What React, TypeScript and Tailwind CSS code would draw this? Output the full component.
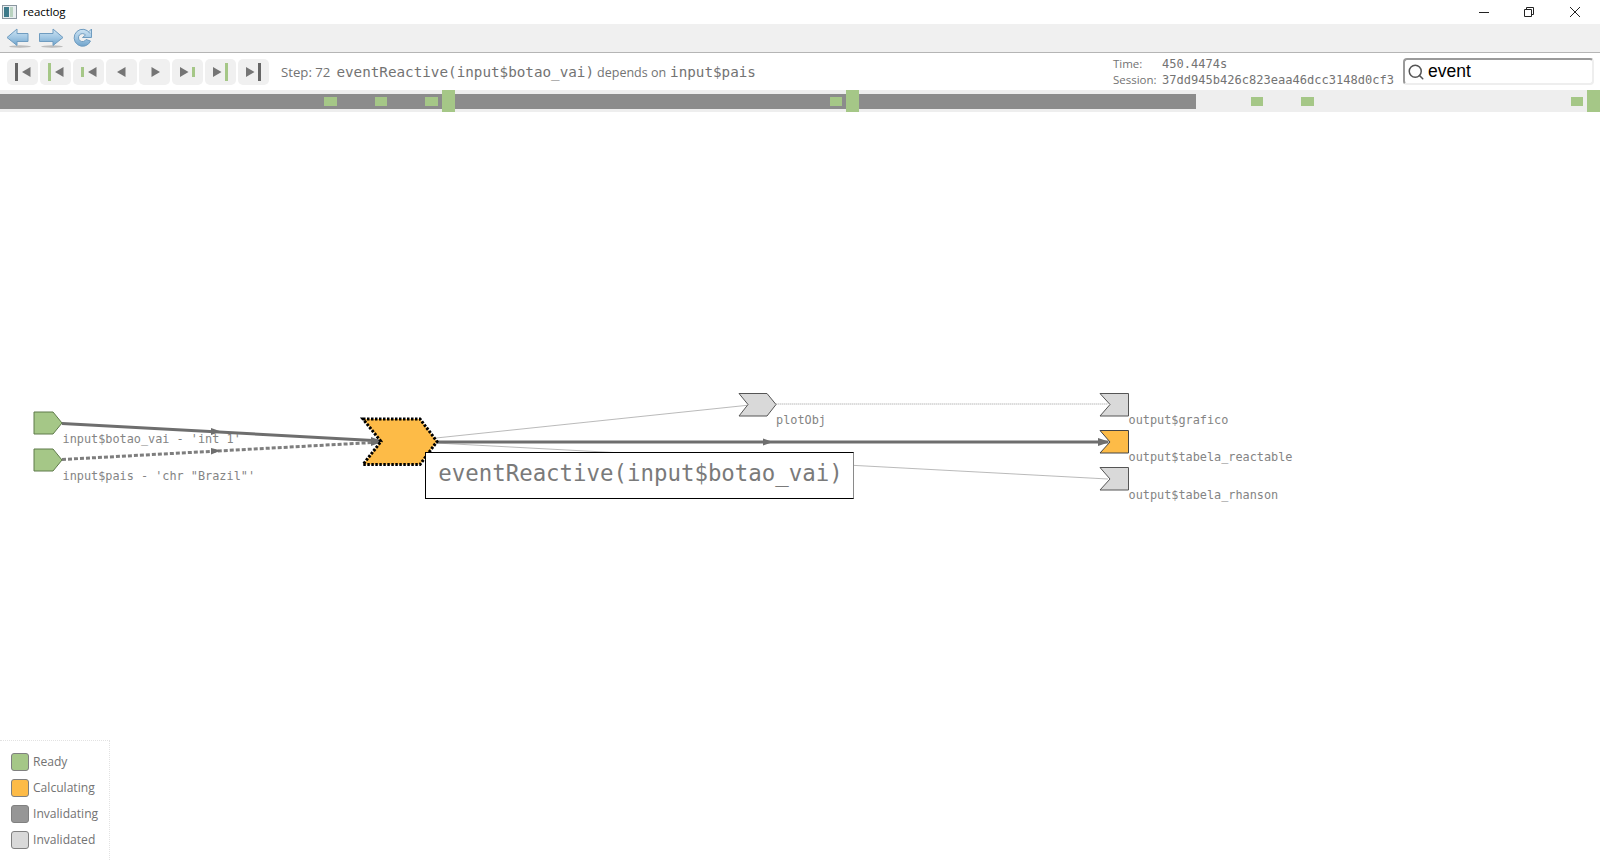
import React from "react";
import { Search } from "lucide-react";

const mono = "[font-family:'DejaVu_Sans_Mono',monospace]";
const green = "#a5c787";
const orange = "#fdbb47";
const light = "#d9d9d9";

// toolbar of the viewer window, blue glossy arrows
function NavIcons() {
  return (
    <svg width="90" height="24" viewBox="0 0 90 24" className="ml-[6px] mt-[2px]">
      <defs>
        <linearGradient id="blue" x1="0" y1="0" x2="0" y2="1">
          <stop offset="0" stopColor="#cfe4f3" />
          <stop offset="0.5" stopColor="#a3c8e4" />
          <stop offset="1" stopColor="#6fa3cb" />
        </linearGradient>
      </defs>
      <ellipse cx="14" cy="19.5" rx="11" ry="1.2" fill="#9a9a9a" opacity="0.6" />
      <ellipse cx="46" cy="19.5" rx="11" ry="1.2" fill="#9a9a9a" opacity="0.6" />
      <path d="M1 10.5 L11 2 V6.5 H22 V14.5 H11 V18.5 Z" fill="url(#blue)" stroke="#6f9cc0" strokeWidth="1" />
      <path d="M57 10.5 L47 2 V6.5 H33.5 V14.5 H47 V18.5 Z" fill="url(#blue)" stroke="#6f9cc0" strokeWidth="1" />
      <path d="M84 6.5 A8.5 8.5 0 1 0 84.5 14 L80 12.5 A4 4 0 1 1 79.5 8 L76.5 10.5 H85.5 V2 L83 4.5" fill="url(#blue)" stroke="#6f9cc0" strokeWidth="1" strokeLinejoin="round" />
    </svg>
  );
}

function Bar({ x, color, h = 18 }: { x: number; color: string; h?: number }) {
  return <rect x={x} y={13 - h / 2} width="3" height={h} fill={color} />;
}

const left = "M15 13 L23.5 8 V18 Z";
const right = "M8 8 L16.5 13 L8 18 Z";
const buttons = [
  <><Bar x={8} color="#666666" /><path d={left} fill="#757575" /></>,
  <><Bar x={8} color={green} /><path d={left} fill="#757575" /></>,
  <><Bar x={8} color={green} h={10} /><path d={left} fill="#757575" /></>,
  <path d="M11 13 L19.5 8 V18 Z" fill="#757575" />,
  <path d="M12.5 8 L21 13 L12.5 18 Z" fill="#757575" />,
  <><path d={right} fill="#757575" /><Bar x={20} color={green} h={10} /></>,
  <><path d={right} fill="#757575" /><Bar x={20} color={green} /></>,
  <><path d={right} fill="#757575" /><Bar x={20} color="#666666" /></>,
];

function Graph() {
  const line = "#6e6e6e";
  const thin = "#a8a8a8";
  const labelCls = "fill-[#848484] text-[11.85px] " + mono;
  return (
    <svg viewBox="0 112 1600 748" className="absolute inset-0 w-full h-full">
      {/* edges */}
      <line x1="436" y1="438" x2="750" y2="405" stroke={thin} strokeWidth="0.8" />
      <line x1="436" y1="443" x2="1108" y2="479" stroke={thin} strokeWidth="0.8" />
      <line x1="776" y1="404" x2="1108" y2="404" stroke={thin} strokeWidth="0.8" strokeDasharray="1.5 0.5" />
      <line x1="62" y1="423.5" x2="382" y2="441" stroke={line} strokeWidth="3" />
      <line x1="62" y1="459.5" x2="382" y2="442" stroke="#7e7e7e" strokeWidth="3" strokeDasharray="4 2" />
      <line x1="436" y1="442" x2="1108" y2="442" stroke={line} strokeWidth="3" />
      <path d="M211 428 L221 431.5 L211 435 Z" fill={line} />
      <path d="M211 448 L221 450.5 L211 454.5 Z" fill={line} />
      <path d="M763 438.5 L773 442 L763 445.5 Z" fill={line} />
      <path d="M371 437 L383 441.5 L371 446 Z" fill={line} />
      <path d="M1098 438 L1110 442 L1098 446 Z" fill={line} />
      {/* nodes */}
      <path d="M34 412 H53 L62 423 L53 434 H34 Z" fill={green} stroke="#5f7a4a" strokeWidth="1" />
      <path d="M34 449 H53 L62 460 L53 471 H34 Z" fill={green} stroke="#5f7a4a" strokeWidth="1" />
      <path d="M363 419 H420 L437 441.5 L420 464.5 H363 L381 441.5 Z" fill={orange} stroke="#000" strokeWidth="3" strokeDasharray="2.5 1.5" />
      <path d="M739 393.5 H767 L776 404.5 L767 416 H739 L748 404.5 Z" fill={light} stroke="#555" strokeWidth="1" />
      <path d="M1100 393.5 H1128.5 V416 H1100 L1110 404.5 Z" fill={light} stroke="#555" strokeWidth="1" />
      <path d="M1100 430.5 H1128.5 V453 H1100 L1110 442 Z" fill={orange} stroke="#444" strokeWidth="1" />
      <path d="M1100 467.5 H1128.5 V490 H1100 L1110 479 Z" fill={light} stroke="#555" strokeWidth="1" />
      {/* labels */}
      <text x="62.5" y="443" className={labelCls}>input$botao_vai - 'int 1'</text>
      <text x="62.5" y="480" className={labelCls}>input$pais - 'chr "Brazil"'</text>
      <text x="776" y="424" className={labelCls}>plotObj</text>
      <text x="1128.5" y="424" className={labelCls}>output$grafico</text>
      <text x="1128.5" y="461" className={labelCls}>output$tabela_reactable</text>
      <text x="1128.5" y="499" className={labelCls}>output$tabela_rhanson</text>
    </svg>
  );
}

const legend = [
  { name: "Ready", swatch: "bg-[#a5c787]" },
  { name: "Calculating", swatch: "bg-[#fdbb47]" },
  { name: "Invalidating", swatch: "bg-[#969696]" },
  { name: "Invalidated", swatch: "bg-[#d9d9d9]" },
];

export default function App() {
  return (
    <div className="w-full h-[860px] overflow-hidden flex flex-col bg-white font-['Open_Sans',sans-serif]">
      {/* title bar */}
      <div className="h-[24px] flex items-center shrink-0">
        <svg width="16" height="16" viewBox="0 0 16 16" className="ml-[2px]">
          <rect x="0.5" y="1.5" width="14" height="13" fill="#e8eef0" stroke="#8b97a0" />
          <rect x="2" y="3" width="5" height="10" fill="#3d7a8a" />
          <rect x="8" y="3" width="3" height="10" fill="#b9d3c0" />
        </svg>
        <span className="ml-[5px] text-[11.5px] tracking-[-0.1px] text-black">reactlog</span>
        <div className="ml-auto flex items-center text-black">
          <svg width="12" height="12" viewBox="0 0 12 12" className="mr-[33px]"><path d="M1 6.5 H11" stroke="#222" /></svg>
          <svg width="12" height="12" viewBox="0 0 12 12" className="mr-[34px]"><path d="M1.5 3.5 H8.5 V10.5 H1.5 Z M3.5 3.5 V1.5 H10.5 V8.5 H8.5" fill="none" stroke="#222" /></svg>
          <svg width="12" height="12" viewBox="0 0 12 12" className="mr-[19px]"><path d="M1 1 L11 11 M11 1 L1 11" stroke="#222" /></svg>
        </div>
      </div>
      {/* nav toolbar */}
      <div className="h-[29px] shrink-0 flex items-center bg-[#f0f0f0] border-b border-[#b5b5b5]">
        <NavIcons />
      </div>
      {/* controls */}
      <div className="h-[37px] shrink-0 flex items-center relative">
        <div className="flex items-center gap-[2px] ml-[7px]">
          {buttons.map((b, i) => (
            <div key={i} className="w-[31px] h-[26px] rounded-[5px] bg-[#f0f0f0]">
              <svg width="31" height="26" viewBox="0 0 31 26">{b}</svg>
            </div>
          ))}
        </div>
        <div className="ml-[12px] mt-[2px] flex items-baseline text-[13.2px] text-[#737373] whitespace-nowrap">
          <span>Step: 72</span>
          <span className={"ml-[6px] text-[14.28px] " + mono}>eventReactive(input$botao_vai)</span>
          <span className="ml-[3px] text-[12.5px]">depends on</span>
          <span className={"ml-[4px] text-[14.25px] " + mono}>input$pais</span>
        </div>
        <div className="ml-auto flex flex-col text-[11.5px] text-[#737373] leading-[16px]">
          <div className="flex items-baseline"><span className="w-[49px]">Time:</span><span className={"text-[12.05px] " + mono}>450.4474s</span></div>
          <div className="flex items-baseline"><span className="w-[49px]">Session:</span><span className={"text-[12.05px] " + mono}>37dd945b426c823eaa46dcc3148d0cf3</span></div>
        </div>
        <div className="ml-[9px] mr-[6px] w-[191px] h-[27px] flex items-center rounded-[4px] border-2 border-[#eeeeee] border-t-[#9a9a9a] border-l-[#9a9a9a]">
          <Search size={18} strokeWidth={2} className="ml-[2px] text-[#555555]" />
          <span className="ml-[3px] text-[17.5px] text-black font-['Liberation_Sans',sans-serif]">event</span>
        </div>
      </div>
      {/* timeline */}
      <div className="h-[22px] shrink-0 relative bg-[#eeeeee]">
        <div className="absolute left-0 top-[4px] w-[1196px] h-[15px] bg-[#8c8c8c]" />
        <div className="absolute left-[324px] top-[7px] w-[13px] h-[9px] bg-[#a5c787]" />
        <div className="absolute left-[375px] top-[7px] w-[12px] h-[9px] bg-[#a5c787]" />
        <div className="absolute left-[425px] top-[7px] w-[13px] h-[9px] bg-[#a5c787]" />
        <div className="absolute left-[442px] top-0 w-[13px] h-[22px] bg-[#a5c787]" />
        <div className="absolute left-[830px] top-[7px] w-[12px] h-[9px] bg-[#a5c787]" />
        <div className="absolute left-[846px] top-0 w-[13px] h-[22px] bg-[#a5c787]" />
        <div className="absolute left-[1251px] top-[7px] w-[12px] h-[9px] bg-[#a5c787]" />
        <div className="absolute left-[1301px] top-[7px] w-[13px] h-[9px] bg-[#a5c787]" />
        <div className="absolute left-[1571px] top-[7px] w-[12px] h-[9px] bg-[#a5c787]" />
        <div className="absolute left-[1587px] top-0 w-[13px] h-[22px] bg-[#a5c787]" />
      </div>
      {/* graph canvas */}
      <div className="flex-1 relative">
        <Graph />
        <div className={"absolute left-[425px] top-[340px] w-[429px] h-[47px] pb-[3px] pl-[2px] bg-white border border-black border-r-[#8a8a8a] flex items-center justify-center text-[22.4px] text-[#7a7a7a] " + mono}>
          eventReactive(input$botao_vai)
        </div>
        <div className="absolute left-0 bottom-0 w-[110px] h-[120px] border-t border-r border-dotted border-[#e2e2e2] pl-[11px] pt-[12px] flex flex-col gap-[9px]">
          {legend.map((l) => (
            <div key={l.name} className="flex items-center h-[17px] gap-[4px]">
              <div className={"w-[18px] h-[18px] rounded-[3px] border border-[#808080] " + l.swatch} />
              <span className="text-[12.1px] mt-[2px] text-[#737373]">{l.name}</span>
            </div>
          ))}
        </div>
      </div>
    </div>
  );
}
